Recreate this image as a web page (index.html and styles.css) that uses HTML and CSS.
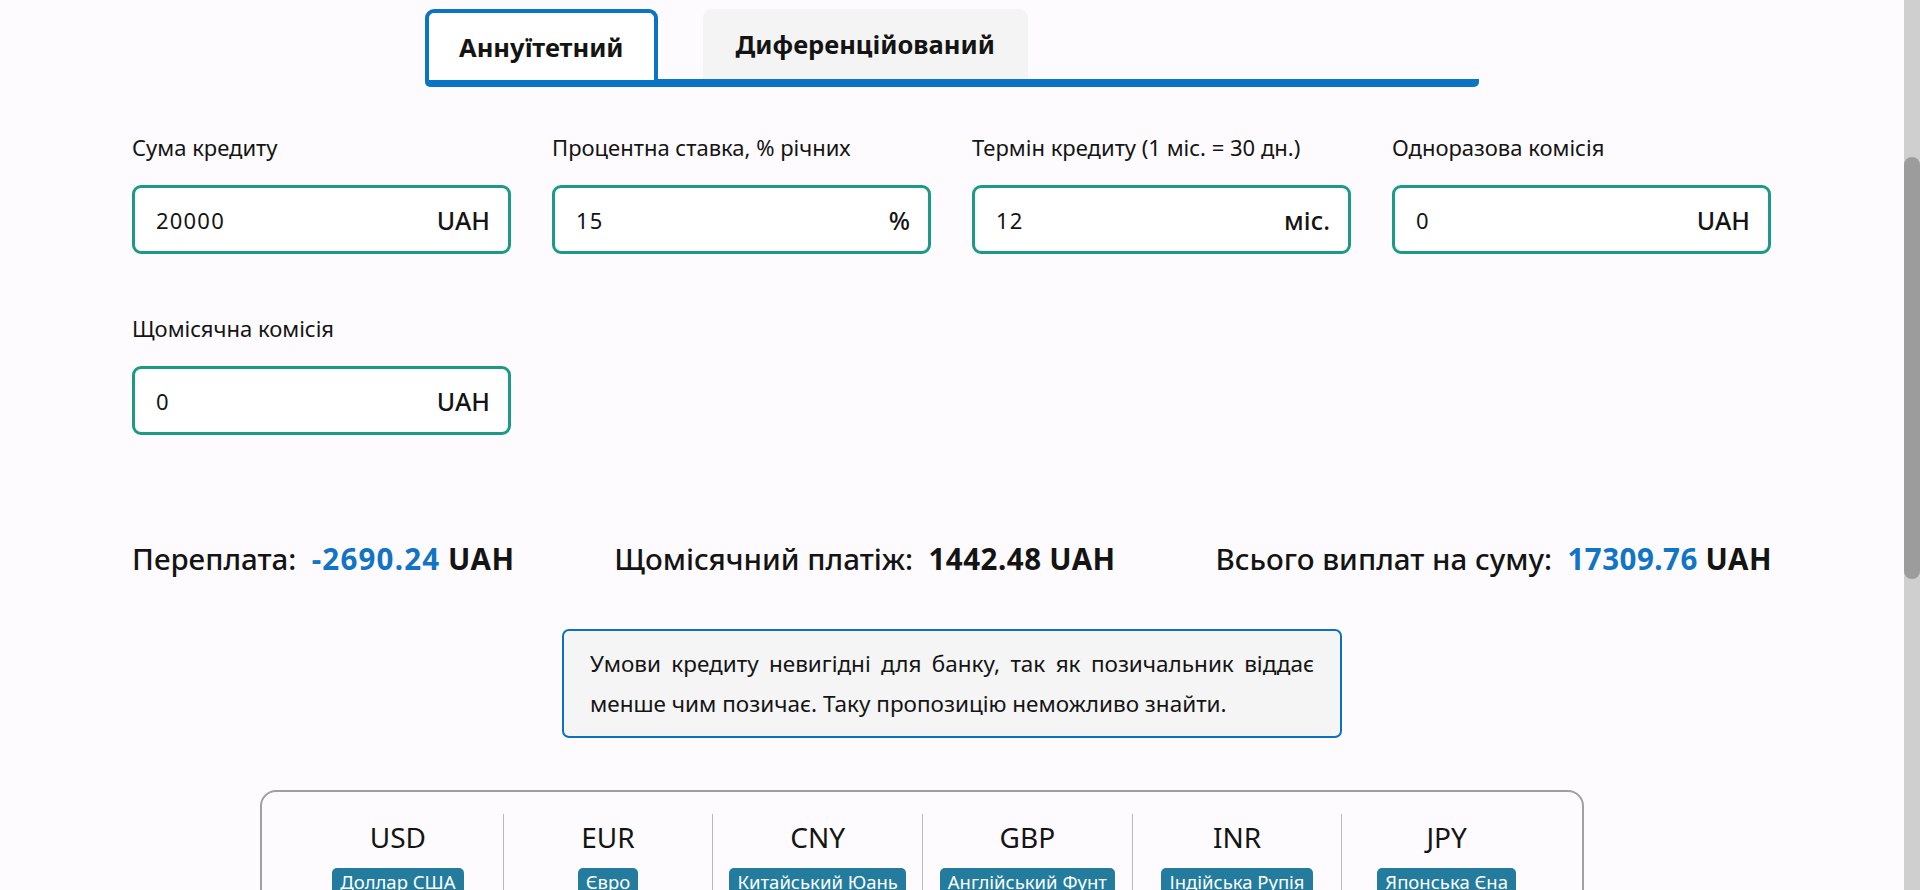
FILE: index.html
```html
<!DOCTYPE html>
<html lang="uk">
<head>
<meta charset="utf-8">
<title>Кредитний калькулятор</title>
<link rel="stylesheet" href="styles.css">
</head>
<body>
<div class="page">
  <header class="header">
    <h1 class="title">Кредитний калькулятор</h1>
    <p class="subtitle">Розрахуйте щомісячний платіж та переплату за кредитом</p>
  </header>

  <main class="calc">
    <nav class="tabs">
      <button class="tab tab-active">Аннуїтетний</button>
      <button class="tab">Диференційований</button>
    </nav>

    <section class="fields">
      <div class="field">
        <label class="label">Сума кредиту</label>
        <div class="input"><span class="value">20000</span><span class="unit">UAH</span></div>
      </div>
      <div class="field">
        <label class="label">Процентна ставка, % річних</label>
        <div class="input"><span class="value">15</span><span class="unit">%</span></div>
      </div>
      <div class="field">
        <label class="label">Термін кредиту (1 міс. = 30 дн.)</label>
        <div class="input"><span class="value">12</span><span class="unit">міс.</span></div>
      </div>
      <div class="field">
        <label class="label">Одноразова комісія</label>
        <div class="input"><span class="value">0</span><span class="unit">UAH</span></div>
      </div>
      <div class="field">
        <label class="label">Щомісячна комісія</label>
        <div class="input"><span class="value">0</span><span class="unit">UAH</span></div>
      </div>
    </section>

    <section class="results">
      <div class="result">Переплата:&nbsp; <span class="num blue neg">-2690.24</span> <span class="num">UAH</span></div>
      <div class="result">Щомісячний платіж:&nbsp; <span class="num">1442.48</span> <span class="num">UAH</span></div>
      <div class="result">Всього виплат на суму:&nbsp; <span class="num blue">17309.76</span> <span class="num">UAH</span></div>
    </section>

    <div class="warning">Умови кредиту невигідні для банку, так як позичальник віддає менше чим позичає. Таку пропозицію неможливо знайти.</div>

    <section class="rates">
      <div class="rate"><div class="code">USD</div><span class="badge">Доллар США</span><div class="price">41.25 / 41.85</div></div>
      <div class="rate"><div class="code">EUR</div><span class="badge">Євро</span><div class="price">44.10 / 44.80</div></div>
      <div class="rate"><div class="code">CNY</div><span class="badge">Китайський Юань</span><div class="price">5.65 / 5.80</div></div>
      <div class="rate"><div class="code">GBP</div><span class="badge">Англійський Фунт</span><div class="price">52.30 / 53.10</div></div>
      <div class="rate"><div class="code">INR</div><span class="badge">Індійська Рупія</span><div class="price">0.48 / 0.50</div></div>
      <div class="rate"><div class="code">JPY</div><span class="badge">Японська Єна</span><div class="price">0.27 / 0.28</div></div>
    </section>
  </main>
</div>
<div class="scrollbar" aria-hidden="true"><div class="thumb" id="thumb"></div></div>
<script src="script.js"></script>
</body>
</html>
```

FILE: styles.css
```css
html {
  background: #fdfbfd;
}
body {
  margin: 0;
  font-family: "Noto Sans", "Open Sans", "DejaVu Sans", sans-serif;
  color: #141414;
  background: #fdfbfd;
}
.page {
  min-height: 1877px;
  margin-right: 16px;
}
.scrollbar {
  position: fixed;
  top: 0;
  right: 0;
  width: 16px;
  height: 100vh;
  background: #cfcfcf;
}
.thumb {
  position: absolute;
  left: 0;
  right: 0;
  top: 157px;
  height: 422px;
  border-radius: 8px;
  background: #9c9c9c;
}
.header {
  height: 331px;
  box-sizing: border-box;
  padding-top: 120px;
  text-align: center;
}
.title {
  margin: 0;
  font-size: 40px;
}
.subtitle {
  margin: 12px 0 0;
  font-size: 20px;
}
.calc {
  width: 1640px;
  margin: 0 auto;
}
.tabs {
  width: 1054px;
  margin: 9px auto 0;
  display: flex;
  gap: 45px;
  border-bottom: 8px solid #0b74c5;
  border-radius: 0 0 5px 5px;
}
.tab {
  height: 70px;
  box-sizing: border-box;
  padding: 0 33px;
  border: none;
  border-radius: 9px 9px 0 0;
  background: #f4f4f4;
  font-family: inherit;
  font-size: 25.5px;
  font-weight: 700;
  color: #141414;
  display: flex;
  align-items: center;
}
.tab-active {
  background: #ffffff;
  border: 4px solid #0b74c5;
  border-bottom: none;
  padding: 0 30px;
  margin-bottom: -1px;
  height: 71px;
}
.fields {
  display: grid;
  grid-template-columns: repeat(4, 379px);
  column-gap: 41px;
  row-gap: 60px;
  margin-top: 46px;
}
.field {
  display: flex;
  flex-direction: column;
  gap: 24px;
}
.label {
  font-size: 22px;
  line-height: 28px;
  font-weight: 400;
}
.input {
  height: 69px;
  box-sizing: border-box;
  border: 3px solid #1c9a88;
  border-radius: 9px;
  background: #ffffff;
  display: flex;
  align-items: center;
  justify-content: space-between;
  padding: 0 18px 0 21px;
}
.value {
  font-size: 22px;
  letter-spacing: 1.2px;
}
.unit {
  font-size: 25px;
  font-weight: 500;
}
.results {
  margin-top: 104px;
  display: flex;
  justify-content: space-between;
  font-size: 29.5px;
  line-height: 40px;
  font-weight: 500;
}
.num {
  font-weight: 700;
  letter-spacing: 0.5px;
}
.neg {
  letter-spacing: 1.2px;
}
.blue {
  color: #1174c4;
}
.warning {
  width: 780px;
  box-sizing: border-box;
  margin: 50px auto 0;
  padding: 13px 26px 12px;
  border: 2px solid #0b72c2;
  border-radius: 7px;
  background: #f4f5f4;
  font-size: 22.5px;
  line-height: 40px;
  text-align: justify;
}
.rates {
  width: 1324px;
  box-sizing: border-box;
  margin: 52px 0 0 128px;
  padding: 22px 31px 30px;
  border: 2px solid #a0a0a0;
  border-radius: 16px;
  display: grid;
  grid-template-columns: repeat(6, 1fr);
}
.rate {
  display: flex;
  flex-direction: column;
  align-items: center;
  padding-top: 6px;
  border-left: 1px solid #b8b8b8;
}
.rate:first-child {
  border-left: none;
}
.code {
  font-size: 28px;
  line-height: 34px;
}
.badge {
  margin-top: 14px;
  background: #237c9d;
  color: #ffffff;
  border-radius: 5px;
  font-size: 18.5px;
  line-height: 28px;
  padding: 0 8px;
}
.price {
  margin-top: 14px;
  font-size: 18px;
  line-height: 28px;
}
```

FILE: script.js
```js
window.scrollTo(0, 331);
var doc = document.documentElement;
var vh = window.innerHeight;
var total = doc.scrollHeight;
var thumb = document.getElementById('thumb');
thumb.style.height = (vh * vh / total) + 'px';
thumb.style.top = (window.scrollY * vh / total) + 'px';
```
